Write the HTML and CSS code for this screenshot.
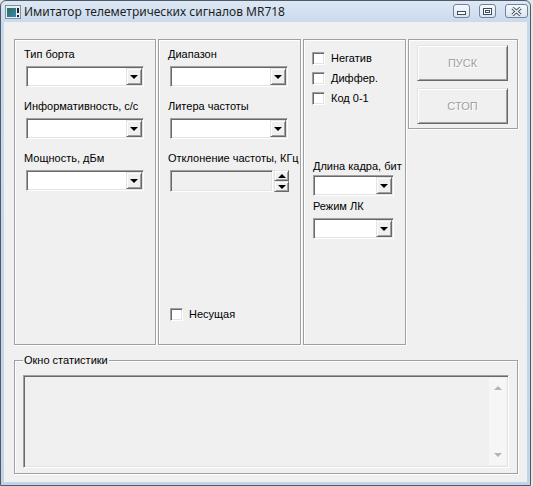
FILE: index.html
```html
<!DOCTYPE html>
<html lang="ru">
<head>
    <meta charset="UTF-8">
    <title>Имитатор телеметрических сигналов MR718</title>
    <link rel="stylesheet" href="styles.css">
</head>
<body>
    <div class="window">
        <!-- Window caption -->
        <div class="titlebar">
            <svg class="app-icon" width="16" height="14" viewBox="0 0 16 14">
                <defs>
                    <linearGradient id="screen" x1="0" y1="0" x2="1" y2="1">
                        <stop offset="0" stop-color="#2e6e52"/>
                        <stop offset="1" stop-color="#3b86b8"/>
                    </linearGradient>
                </defs>
                <rect x="0.5" y="0.5" width="15" height="13" fill="#e9eef4" stroke="#7f90a3"/>
                <rect x="2" y="3" width="9" height="9" fill="url(#screen)"/>
                <rect x="12" y="3" width="2" height="5" fill="#222"/>
                <rect x="12" y="10" width="2" height="2" fill="#222"/>
            </svg>
            <span class="title">Имитатор телеметрических сигналов MR718</span>
            <div class="caption-buttons">
                <span class="cap-btn cap-min">
                    <svg width="9" height="4" viewBox="0 0 9 4"><rect x="0.5" y="0.5" width="8" height="3" fill="#fff" stroke="#3c4b5d"/></svg>
                </span>
                <span class="cap-btn cap-max">
                    <svg width="9" height="7" viewBox="0 0 9 7"><rect x="0.5" y="0.5" width="8" height="6" fill="#fff" stroke="#3c4b5d"/><rect x="2.5" y="2.5" width="4" height="2" fill="none" stroke="#3c4b5d"/></svg>
                </span>
                <span class="cap-btn cap-close">
                    <svg width="11" height="9" viewBox="0 0 11 9"><path d="M1.5 1 L9.5 8 M9.5 1 L1.5 8" stroke="#3c4b5d" stroke-width="3.2"/><path d="M1.5 1 L9.5 8 M9.5 1 L1.5 8" stroke="#fff" stroke-width="1.4"/></svg>
                </span>
            </div>
        </div>

        <!-- Client area -->
        <div class="client">
            <div class="top-row">
                <div class="group group-board">
                    <div class="field-label">Тип борта</div>
                    <div class="combo"><span class="combo-btn"></span></div>
                    <div class="field-label">Информативность, с/с</div>
                    <div class="combo"><span class="combo-btn"></span></div>
                    <div class="field-label">Мощность, дБм</div>
                    <div class="combo"><span class="combo-btn"></span></div>
                </div>

                <div class="group group-freq">
                    <div class="field-label">Диапазон</div>
                    <div class="combo"><span class="combo-btn"></span></div>
                    <div class="field-label">Литера частоты</div>
                    <div class="combo"><span class="combo-btn"></span></div>
                    <div class="field-label">Отклонение частоты, КГц</div>
                    <div class="spin">
                        <div class="spin-edit"></div>
                        <div class="spin-arrows">
                            <span class="spin-btn spin-up"></span>
                            <span class="spin-btn spin-down"></span>
                        </div>
                    </div>
                    <label class="check carrier"><span class="check-box"></span>Несущая</label>
                </div>

                <div class="group group-mode">
                    <label class="check"><span class="check-box"></span>Негатив</label>
                    <label class="check"><span class="check-box"></span>Диффер.</label>
                    <label class="check"><span class="check-box"></span>Код 0-1</label>
                    <div class="field-label frame-label">Длина кадра, бит</div>
                    <div class="combo combo-small"><span class="combo-btn"></span></div>
                    <div class="field-label lk-label">Режим ЛК</div>
                    <div class="combo combo-small"><span class="combo-btn"></span></div>
                </div>

                <div class="group group-control">
                    <button class="btn" disabled>ПУСК</button>
                    <button class="btn" disabled>СТОП</button>
                </div>
            </div>

            <fieldset class="stats">
                <legend>Окно статистики</legend>
                <div class="stats-box">
                    <div class="scrollbar">
                        <span class="arrow-up"></span>
                        <span class="arrow-down"></span>
                    </div>
                </div>
            </fieldset>
        </div>
    </div>
</body>
</html>
```

FILE: styles.css
```css
* {
    box-sizing: border-box;
}

body {
    margin: 0;
    background: #e6e6e6;
    font-family: "Liberation Sans", Arial, sans-serif;
    font-size: 11px;
    color: #000;
}

/* Window frame (Windows 7 basic look) */
.window {
    width: 531px;
    height: 486px;
    border: 1px solid #4f5a66;
    border-radius: 6px 6px 0 0;
    background: linear-gradient(#dde8f5, #c9d9ec 22px, #c3d4e9);
    display: flex;
    flex-direction: column;
}

.titlebar {
    height: 21px;
    display: flex;
    align-items: center;
    padding: 0 2px 0 4px;
}

.app-icon {
    margin-right: 3px;
    flex: none;
}

.title {
    flex: 1;
    font-family: "Noto Sans", sans-serif;
    font-size: 12px;
    color: #1e1e1e;
    white-space: nowrap;
}

.caption-buttons {
    display: flex;
    gap: 9px;
    align-self: flex-start;
    margin-top: 3px;
}

.cap-btn {
    height: 14px;
    width: 17px;
    border: 1px solid #71839a;
    border-radius: 3px;
    background: linear-gradient(#f6f9fc, #dce5f0);
    display: flex;
    align-items: center;
    justify-content: center;
}

.cap-min svg {
    margin-top: 4px;
}

.cap-close {
    width: 23px;
}

.client {
    flex: 1;
    margin: 0 3px 3px;
    background: #f0f0f0;
    padding: 17px 0 0 10px;
    display: flex;
    flex-direction: column;
}

/* Group boxes */
.top-row {
    display: flex;
    gap: 2px;
    align-items: flex-start;
}

.group {
    border: 1px solid #a0a0a0;
    box-shadow: inset 1px 1px #fff, 1px 1px #fff;
    height: 306px;
    display: flex;
    flex-direction: column;
    align-items: flex-start;
}

.group-board {
    width: 142px;
    padding: 8px 0 0 9px;
}

.group-freq {
    width: 143px;
    padding: 8px 0 0 9px;
}

.group-mode {
    width: 103px;
    padding: 8px 0 0 8px;
}

.group-control {
    width: 110px;
    height: 90px;
    padding: 5px 0 0 8px;
    gap: 7px;
}

.field-label {
    line-height: 13px;
    height: 13px;
    white-space: nowrap;
    margin-top: 13px;
}

.field-label:first-child {
    margin-top: 0;
}

/* Sunken controls */
.combo,
.spin-edit,
.check-box,
.stats-box {
    border: 1px solid;
    border-color: #a0a0a0 #fff #fff #a0a0a0;
    box-shadow: inset 1px 1px #696969, inset -1px -1px #e3e3e3;
}

.combo {
    width: 118px;
    height: 21px;
    margin: 5px 0 0 2px;
    background: #fff;
    padding: 1px;
    display: flex;
    justify-content: flex-end;
}

.combo-small {
    width: 81px;
    margin-left: 1px;
}

.combo-btn,
.spin-btn,
.btn {
    border: 1px solid;
    border-color: #e3e3e3 #696969 #696969 #e3e3e3;
    box-shadow: inset 1px 1px #fff, inset -1px -1px #a0a0a0;
    background: #f0f0f0;
}

.combo-btn {
    width: 16px;
    height: 17px;
    display: flex;
    align-items: center;
    justify-content: center;
}

.combo-btn::after,
.spin-down::after {
    content: "";
    border-style: solid;
    border-width: 4px 4px 0;
    border-color: #000 transparent transparent;
}

.spin {
    display: flex;
    margin: 5px 0 0 2px;
}

.spin-edit {
    width: 103px;
    height: 22px;
    background: #f0f0f0;
}

.spin-arrows {
    display: flex;
    flex-direction: column;
    padding: 0 0 0 1px;
}

.spin-btn {
    width: 15px;
    height: 11px;
    display: flex;
    align-items: center;
    justify-content: center;
}

.spin-up::after {
    content: "";
    border-style: solid;
    border-width: 0 4px 4px;
    border-color: transparent transparent #000;
}

/* Check boxes */
.check {
    display: flex;
    align-items: center;
    gap: 6px;
    height: 20px;
    white-space: nowrap;
}

.check-box {
    width: 13px;
    height: 13px;
    background: #fff;
}

.carrier {
    margin: auto 0 20px 2px;
}

.frame-label {
    margin: 52px 0 0 1px;
}

.frame-label + .combo {
    margin-top: 2px;
}

.lk-label {
    margin: 4px 0 0 1px;
}

/* Push buttons */
.btn {
    width: 91px;
    height: 36px;
    font-family: "Liberation Sans", Arial, sans-serif;
    font-size: 11px;
    color: #a0a0a0;
    text-shadow: 1px 1px #fff;
    padding: 0;
}

/* Statistics */
.stats {
    width: 504px;
    margin: 9px 0 0;
    padding: 8px 8px 5px;
    border: 1px solid #a0a0a0;
    box-shadow: inset 1px 1px #fff, 1px 1px #fff;
}

.stats legend {
    padding: 0 1px;
    line-height: 13px;
    background: #f0f0f0;
}

.stats-box {
    height: 93px;
    background: #f0f0f0;
    padding: 2px;
    display: flex;
    justify-content: flex-end;
}

.scrollbar {
    width: 17px;
    background: #f6f6f6;
    display: flex;
    flex-direction: column;
    align-items: center;
    justify-content: space-between;
    padding: 8px 0 8px;
}

.arrow-up,
.arrow-down {
    border-style: solid;
    border-color: transparent;
}

.arrow-up {
    border-width: 0 4px 4px;
    border-bottom-color: #b4b4b4;
}

.arrow-down {
    border-width: 4px 4px 0;
    border-top-color: #b4b4b4;
}
```
